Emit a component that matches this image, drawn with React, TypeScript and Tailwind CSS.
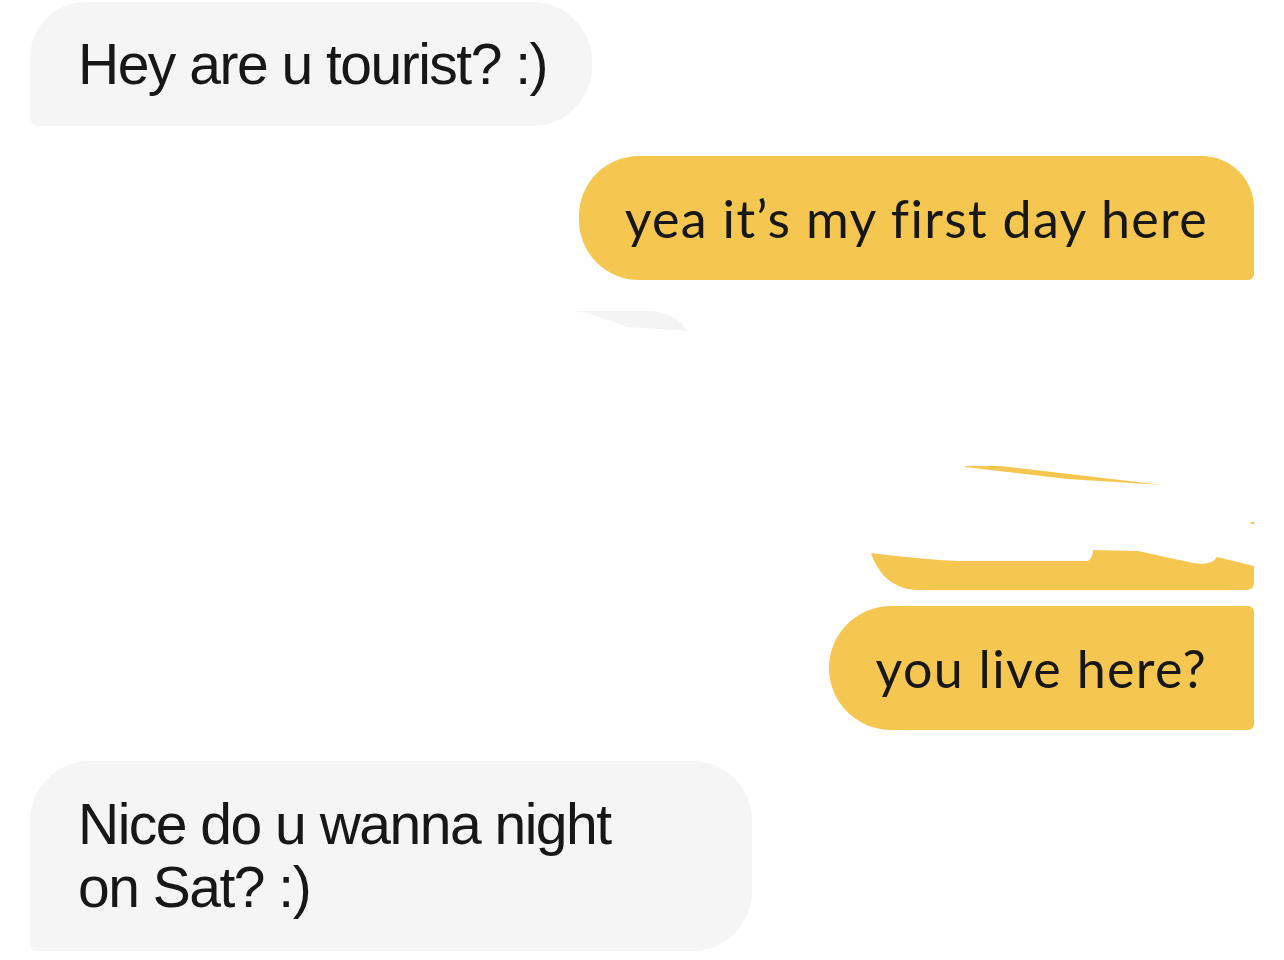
import React from 'react';

const grayText = "text-[57px] leading-[63px] tracking-[-1.5px] text-[#171717] font-['Liberation_Sans',Arial,sans-serif]";
const yellowText = "text-[52px] leading-[60px] tracking-[1.3px] text-[#171717] font-['Lato','Noto_Sans',sans-serif]";

function Fragments() {
  return (
    <svg width="1224" height="326" viewBox="0 0 1224 326" className="block">
      <path d="M543 31 L623 31 C640 33 650 40 658 51 L597 47 C580 40 560 33 543 31 Z" fill="#f4f4f4" />
      <path d="M935 186 L970 186 L1133 205 L1037 199 L935 187 Z" fill="#f5c750" />
      <path d="M1219 243 L1226 241 L1226 245 Z" fill="#f5c750" />
      <path
        d="M841 273 Q900 280 930 281 L1057 281 Q1063 279 1063 270 L1108 271 L1163 283 Q1182 286 1187 277 L1224 286 L1224 302 Q1224 310 1216 310 L888 310 C865 310 848 295 841 273 Z"
        fill="#f5c750"
      />
    </svg>
  );
}

export default function App() {
  return (
    <div className="min-h-screen w-full bg-white px-[30px] pt-[2px]">
      <div className="flex flex-col">
        <div className="self-start">
          <div className="flex h-[124px] items-center rounded-tl-[56px] rounded-tr-[60px] rounded-br-[60px] rounded-bl-[8px] bg-[#f5f5f5] pl-[48px] pr-[45px]">
            <span className={grayText}>Hey are u tourist? :)</span>
          </div>
        </div>

        <div className="mt-[30px] self-end">
          <div className="flex h-[124px] items-center rounded-tl-[60px] rounded-bl-[60px] rounded-tr-[52px] rounded-br-[6px] bg-[#f5c750] pl-[46px] pr-[46px]">
            <span className={yellowText}>yea it’s my first day here</span>
          </div>
        </div>

        <Fragments />

        <div className="self-end">
          <div className="flex h-[124px] items-center rounded-l-[62px] rounded-r-[6px] bg-[#f5c750] pl-[47px] pr-[47px]">
            <span className={yellowText}>you live here?</span>
          </div>
        </div>

        <div className="mt-[31px] self-start">
          <div className="w-[722px] rounded-tl-[60px] rounded-tr-[60px] rounded-br-[60px] rounded-bl-[6px] bg-[#f5f5f5] py-[32px] pl-[48px] pr-[40px]">
            <p className={grayText}>
              Nice do u wanna night
              <br />
              on Sat? :)
            </p>
          </div>
        </div>
      </div>
    </div>
  );
}
